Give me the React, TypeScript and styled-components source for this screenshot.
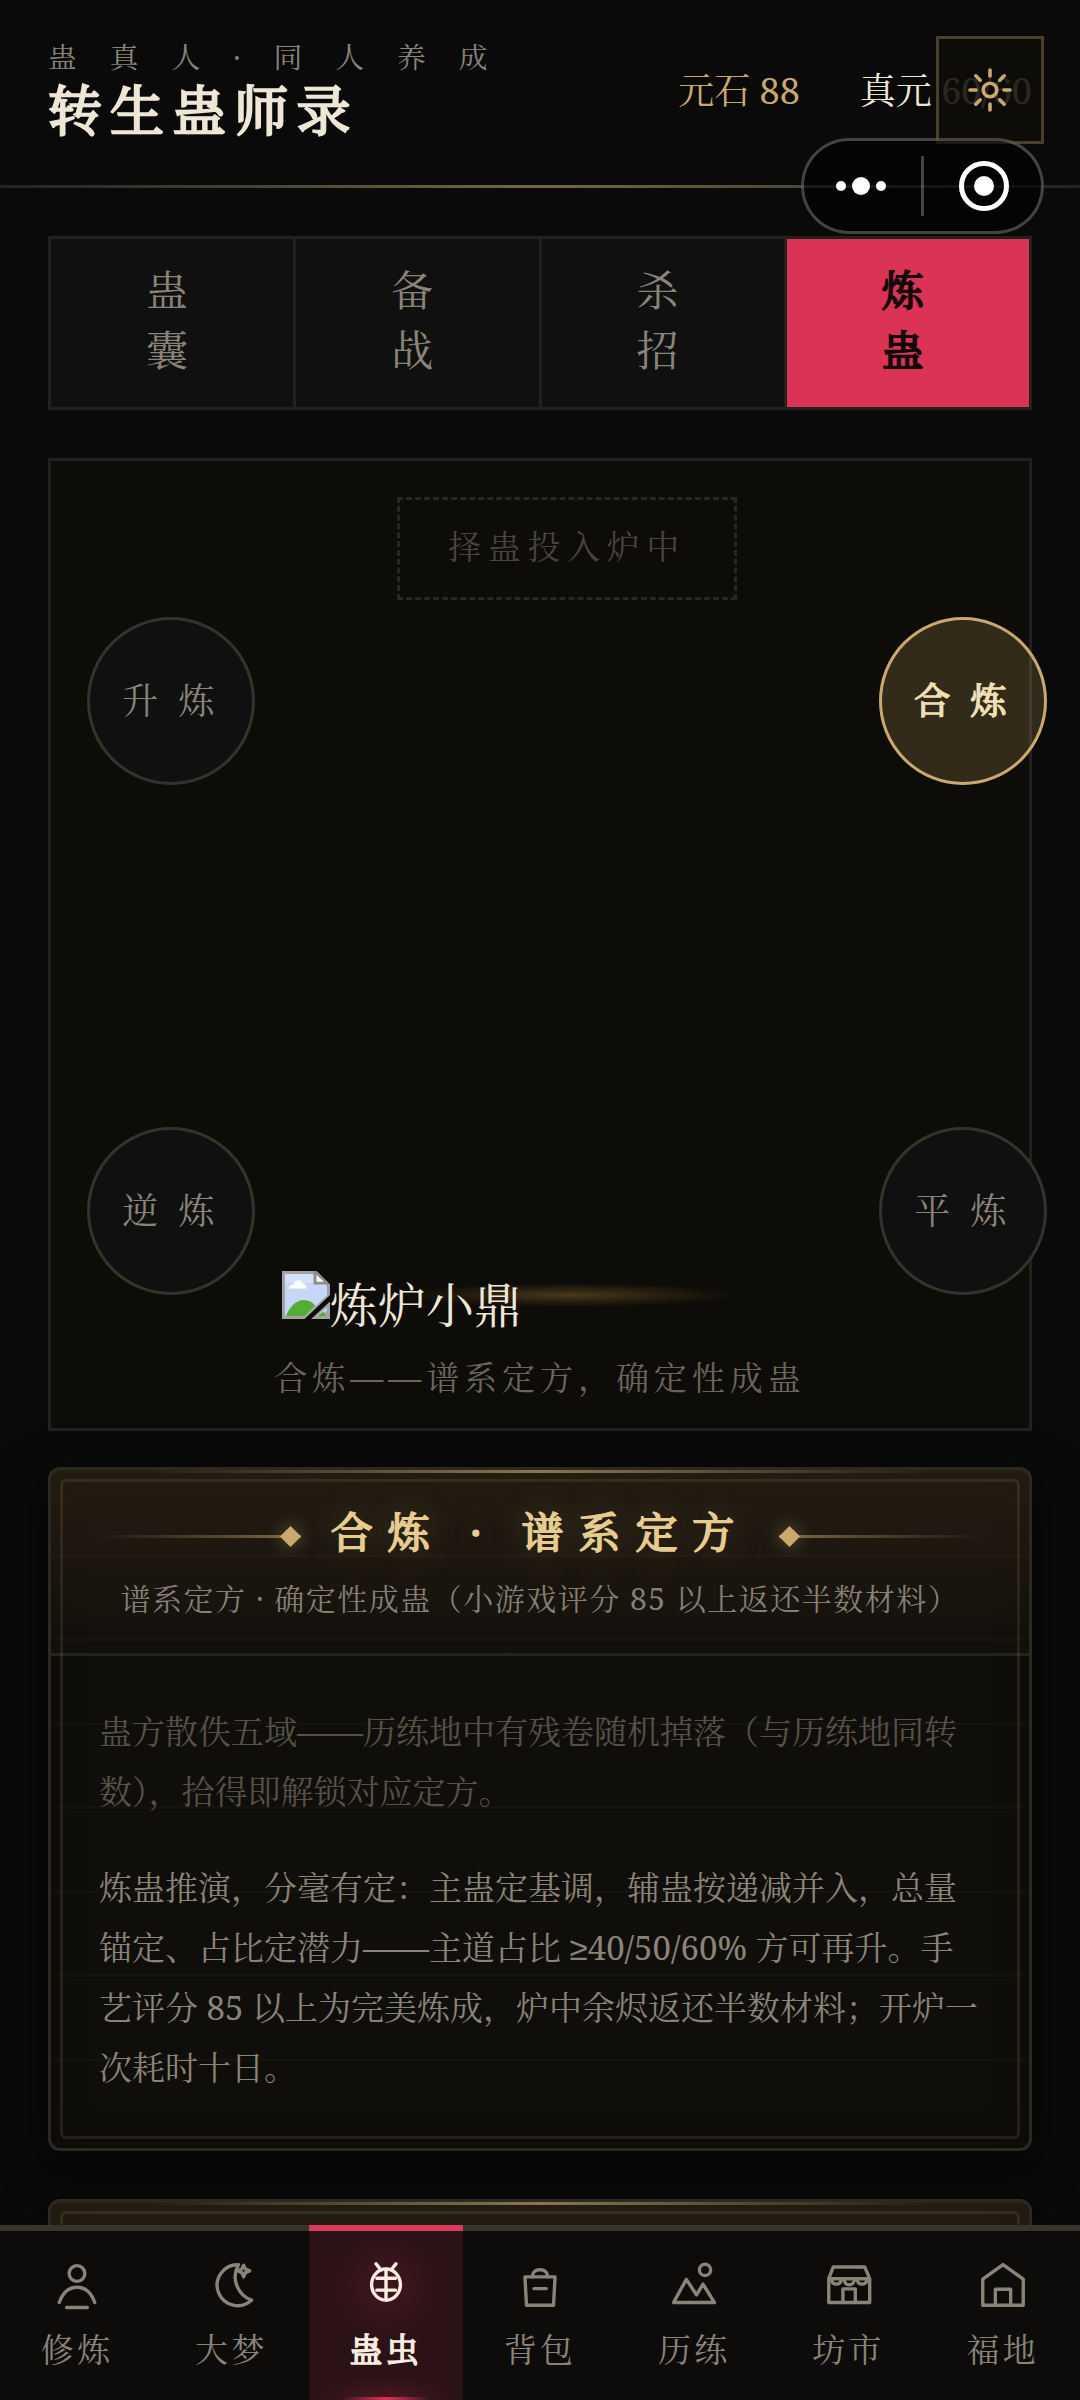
import React from "react";
import styled, { createGlobalStyle, css } from "styled-components";

const Global = createGlobalStyle`
  *, *::before, *::after { box-sizing: border-box; }
  body {
    margin: 0;
    background: #0a0a0a;
    color: #efe7d6;
    font-family: "Noto Serif", "Noto Serif CJK SC", "Noto Serif SC", "Noto Sans CJK SC", serif;
    font-size: 48px;
  }
  p, h1, h2 { margin: 0; font-weight: 400; }
  button { font: inherit; margin: 0; }
`;

/* Emboldened regular face: every stroke grows evenly. */
const heavy = css`
  font-weight: 400;
  -webkit-text-stroke: 0.042em currentColor;
`;

const Screen = styled.div`
  width: 1080px;
  height: 2400px;
  display: flex;
  flex-direction: column;
  overflow: hidden;
  position: relative;
  background: #0a0a0a;
`;

/* ---------- header ---------- */

const Header = styled.header`
  flex: none;
  height: 188px;
  padding: 35px 48px 0;
  display: flex;
  justify-content: space-between;
  border-bottom: 3px solid;
  border-image: linear-gradient(90deg, #22221f, #75684a 50%, #22221f) 1;
`;

const Brand = styled.div`
  display: flex;
  flex-direction: column;
`;

const Series = styled.p`
  font-size: 28.8px;
  line-height: 43px;
  letter-spacing: 32.95px;
  color: #8a8478;
  white-space: nowrap;
`;

const GameTitle = styled.h1`
  font-size: 54px;
  line-height: 64px;
  ${heavy}
  letter-spacing: 8.1px;
  white-space: nowrap;
`;

const Stats = styled.div`
  display: flex;
  gap: 60px;
  margin-top: 26px;
  font-size: 36px;
  line-height: 60px;
  white-space: nowrap;
`;

const Stat = styled.span<{ $gold?: boolean }>`
  color: ${(p) => (p.$gold ? "#c9a96e" : "#efe7d6")};
`;

const ThemeButton = styled.button`
  position: absolute;
  top: 36px;
  right: 36px;
  width: 108px;
  height: 108px;
  padding: 0;
  display: grid;
  place-items: center;
  border: 3px solid #4a4029;
  background: rgba(15, 13, 8, 0.88);
  color: #c9a96e;
`;

const Capsule = styled.div`
  position: absolute;
  top: 138px;
  right: 36px;
  width: 243px;
  height: 96px;
  display: grid;
  grid-template-columns: 1fr 3px 1fr;
  align-items: center;
  justify-items: center;
  border: 3px solid rgba(255, 255, 255, 0.25);
  border-radius: 48px;
  background: rgba(0, 0, 0, 0.6);
`;

const CapsuleRule = styled.span`
  width: 3px;
  height: 60px;
  background: rgba(255, 255, 255, 0.25);
`;

const Dots = styled.span`
  display: flex;
  align-items: center;
  gap: 6px;
  margin-right: 3px;
`;

const Dot = styled.span<{ $size: number }>`
  width: ${(p) => p.$size}px;
  height: ${(p) => p.$size}px;
  border-radius: 50%;
  background: #fff;
`;

const Ring = styled.span`
  width: 50px;
  height: 50px;
  display: grid;
  place-items: center;
  border: 5px solid #fff;
  border-radius: 50%;
  margin-left: 2px;
`;

/* ---------- body ---------- */

const Content = styled.main`
  flex: 1;
  min-height: 0;
  overflow: hidden;
  padding: 48px 48px 0;
`;

const Tabs = styled.nav`
  display: grid;
  grid-template-columns: repeat(4, 1fr);
  gap: 3px;
  height: 174px;
  border: 3px solid #23211b;
  background: #23211b;
`;

const Tab = styled.button<{ $active?: boolean }>`
  padding: 21px 92px 27px 90px;
  border: 0;
  background: ${(p) => (p.$active ? "#da3355" : "#101010")};
  color: ${(p) => (p.$active ? "#120a0a" : "#8a8478")};
  font-size: 42px;
  ${(p) => p.$active && heavy}
  line-height: 60px;
  letter-spacing: 8.4px;
  word-break: break-all;
`;

const Furnace = styled.section`
  height: 973px;
  margin-top: 48px;
  padding: 36px 36px 0;
  border: 3px solid #23211d;
  background: #0d0c09;
`;

const Stage = styled.div`
  width: 960px;
  height: 798px;
  display: flex;
  flex-direction: column;
  align-items: center;
`;

const Slot = styled.div`
  height: 103px;
  padding: 0 48px;
  border: 3px dashed #292721;
  color: #48443c;
  font-size: 33px;
  line-height: 93px;
  letter-spacing: 6.6px;
  white-space: nowrap;
`;

const StageRow = styled.div<{ $last?: boolean }>`
  width: 100%;
  display: flex;
  justify-content: space-between;
  margin-top: ${(p) => (p.$last ? "auto" : "17px")};
`;

const Mode = styled.button<{ $active?: boolean }>`
  flex: none;
  width: 168px;
  height: 168px;
  padding: 0 0 4px;
  border-radius: 50%;
  border: 3px solid #35322b;
  background: #101010;
  color: #8a8478;
  font-size: 36px;
  letter-spacing: 5.4px;
  white-space: nowrap;
  position: relative;
  ${(p) =>
    p.$active &&
    css`
      border-color: #c9a96e;
      background: rgba(201, 169, 97, 0.2);
      color: #f0dfb4;
      ${heavy}
    `}
`;

const Cauldron = styled.div`
  flex: 1;
  height: 168px;
  padding: 144px 0 0 27px;
  display: flex;
  align-items: flex-start;
  position: relative;
`;

const Ember = styled.span`
  position: absolute;
  left: 147px;
  top: 156px;
  width: 336px;
  height: 24px;
  background: radial-gradient(closest-side, rgba(201, 149, 60, 0.33), rgba(201, 149, 60, 0.15) 50%, transparent);
`;

const BrokenImage = styled.svg`
  flex: none;
  display: block;
`;

const AltText = styled.span`
  position: relative;
  line-height: 67px;
  white-space: nowrap;
`;

const FurnaceCaption = styled.p`
  margin-top: 53px;
  text-align: center;
  font-size: 33px;
  line-height: 60px;
  letter-spacing: 4.95px;
  color: #6b655a;
  white-space: nowrap;
`;

const Scroll = styled.section<{ $gap: number }>`
  position: relative;
  height: 684px;
  margin-top: ${(p) => p.$gap}px;
  border: 3px solid #2c2922;
  border-radius: 12px;
  background:
    linear-gradient(180deg, rgba(201, 169, 97, 0.022) 3px, transparent 3px) 0 0 / 100% 84px,
    #100e0a;
  box-shadow: 0 12px 48px rgba(0, 0, 0, 0.6), inset 0 0 36px rgba(0, 0, 0, 0.3);

  &::before {
    content: "";
    position: absolute;
    inset: 9px;
    border: 3px solid rgba(201, 169, 110, 0.13);
    border-radius: 6px;
    pointer-events: none;
  }
  &::after {
    content: "";
    position: absolute;
    top: 0;
    left: 10%;
    right: 10%;
    height: 3px;
    background: linear-gradient(90deg, transparent, #8a7650, transparent);
  }
`;

const ScrollHead = styled.div`
  height: 186px;
  padding: 32px 48px 0;
  border-bottom: 3px solid #24221d;
  border-radius: 9px 9px 0 0;
  background: linear-gradient(180deg, rgba(201, 155, 95, 0.11), rgba(201, 169, 97, 0.01));
`;

const TitleRow = styled.div`
  display: flex;
  align-items: center;
  gap: 30px;
`;

const Flourish = styled.span<{ $side: "left" | "right" }>`
  flex: 1;
  height: 3px;
  margin-top: 9px;
  position: relative;
  background: linear-gradient(
    ${(p) => (p.$side === "left" ? "90deg" : "270deg")},
    transparent,
    rgba(201, 169, 110, 0.55)
  );

  &::after {
    content: "";
    position: absolute;
    top: -6px;
    ${(p) => (p.$side === "left" ? "right: 3px;" : "left: 3px;")}
    width: 15px;
    height: 15px;
    background: #c9a96e;
    transform: rotate(45deg);
    box-shadow: 0 0 18px rgba(201, 169, 110, 0.5);
  }
`;

const ScrollTitle = styled.h2`
  font-size: 42px;
  line-height: 60px;
  ${heavy}
  letter-spacing: 14.9px;
  color: #e6cc8f;
  text-shadow: 0 0 36px rgba(201, 169, 110, 0.4);
  white-space: nowrap;
`;

const ScrollSub = styled.p`
  margin-top: 13px;
  text-align: center;
  font-size: 30px;
  line-height: 48px;
  letter-spacing: 1.5px;
  color: #857f74;
  white-space: nowrap;
`;

const ScrollBody = styled.div`
  display: flex;
  flex-direction: column;
  gap: 36px;
  padding: 46px 48px;
  font-size: 33px;
  line-height: 60px;
`;

const Passage = styled.p<{ $faint?: boolean }>`
  color: ${(p) => (p.$faint ? "#565147" : "#8a8478")};
`;

const Sign = styled.span`
  font-family: "Noto Sans", sans-serif;
  line-height: 1;
`;

/* ---------- bottom navigation ---------- */

const BottomNav = styled.nav`
  flex: none;
  position: relative;
  height: 175px;
  display: grid;
  grid-template-columns: repeat(7, 1fr);
  background: #0d0c0a;
`;

const NavItem = styled.button<{ $active?: boolean }>`
  position: relative;
  padding: 27px 0 0;
  border: 0;
  border-top: 6px solid ${(p) => (p.$active ? "#da3a5b" : "#38342b")};
  background: transparent;
  color: #8a8478;
  display: flex;
  flex-direction: column;
  align-items: center;
  font-size: 33px;
  line-height: 48px;
  letter-spacing: 3.3px;
  ${(p) =>
    p.$active &&
    css`
      color: #fbeee0;
      ${heavy}
      background:
        radial-gradient(circle 54px at 50% 56px, rgba(218, 51, 85, 0.13), transparent),
        radial-gradient(ellipse 70px 24px at 50% 100%, rgba(218, 51, 85, 0.18), transparent),
        #2b1217;
      &::after {
        content: "";
        position: absolute;
        left: 34px;
        right: 34px;
        bottom: 0;
        height: 3px;
        background: linear-gradient(90deg, transparent, #da3355, transparent);
      }
    `}
`;

const NavIcon = styled.svg`
  width: 54px;
  height: 54px;
  margin-bottom: 14px;
  fill: none;
  stroke: currentColor;
  stroke-width: 1.5;
  stroke-linecap: round;
  stroke-linejoin: round;
`;

const SunIcon = styled.svg`
  width: 48px;
  height: 48px;
  fill: none;
  stroke: currentColor;
  stroke-width: 1.8;
  stroke-linecap: round;
`;

const TABS = ["蛊囊", "备战", "杀招", "炼蛊"];

const NAV: { label: string; icon: React.ReactNode }[] = [
  {
    label: "修炼",
    icon: (
      <>
        <circle cx="12" cy="6.9" r="3.5" />
        <path d="M4.1 19.8c1.5-4.4 4.3-6.8 7.9-6.8s6.4 2.4 7.9 6.8M7.4 22h9.2" />
      </>
    ),
  },
  {
    label: "大梦",
    icon: (
      <>
        <path d="M15.3 3A9.1 9.1 0 1 0 21.2 18.7C15.5 17 11.6 9.5 15.3 3z" />
        <path d="M17.6 3.2l.8 1.7 1.9.8-1.900.8-.8 1.900-.8-1.900-1.800-.8 1.800-.8z" />
      </>
    ),
  },
  {
    label: "蛊虫",
    icon: (
      <>
        <ellipse cx="12" cy="11.8" rx="6.4" ry="6.9" />
        <path d="M12 5v13.7M7.9 9h8.3M7.9 14.3h8.3M9.5 5L7.6 2.6M14.5 5l1.9-2.4" />
      </>
    ),
  },
  {
    label: "背包",
    icon: (
      <>
        <path d="M5.3 8.4h13.4L18 21H6z" />
        <path d="M8.6 8.4C8.6 6.3 10 5.2 12 5.2s3.4 1.1 3.4 3.2M9.3 13.6h5.5" />
      </>
    ),
  },
  {
    label: "历练",
    icon: (
      <>
        <path d="M2.9 19.8L8.6 9.5l4.5 6.9 2.9-4.8 5.1 8.200z" />
        <circle cx="16.9" cy="5.3" r="2.5" />
      </>
    ),
  },
  {
    label: "坊市",
    icon: (
      <>
        <path d="M5 4h14l2.2 5.2H3zM3 9.2V19.8h18.2V9.2" />
        <path d="M4.2 9.8c.5 2.4 3.8 2.4 4.3.2M9.9 10c.5 2.5 3.9 2.5 4.4 0M15.7 10c.5 2.2 3.8 2.2 4.3-.2M9.3 19.8v-6.1h5.5v6.1" />
      </>
    ),
  },
  {
    label: "福地",
    icon: <path d="M12 2.9l9 6.5V21H3V9.4zM8.6 21v-7.100h6.800V21" />,
  },
];

function BrokenPicture() {
  return (
    <BrokenImage width="48" height="48" viewBox="0 0 16 16">
      <path d="M0 0h11.5L16 4.5V8L7.5 16H0z" fill="#a3a3a3" />
      <path d="M1 1h10l4 4v3.2L7.6 15H1z" fill="#c6d6f6" />
      <path d="M1 1h9.5v3H1z" fill="#d5e1f8" />
      <path d="M2.3 5.8C2.3 4.7 3.4 4.4 4 4.3c.3-1.5 2.3-1.7 2.9-.2C7.8 4.3 8.3 5 8.3 5.8z" fill="#fff" />
      <path d="M1.3 15C2.6 11.8 4.9 9.7 7.2 9.7c1.7 0 3 .7 3.9 1.9L7.6 15z" fill="#56ad35" />
      <path d="M10.5 0h1L16 4.5h-5.500z" fill="#8d8d8d" />
      <path d="M11.5 1.3v2.3h2.500z" fill="#fff" />
      <path d="M16 10.2V16H9.7z" fill="#a3a3a3" />
      <path d="M15 12.2V13L13.7 15h-2.200z" fill="#c6d6f6" />
      <path d="M13.8 13.5l1 1.500h-3z" fill="#56ad35" />
    </BrokenImage>
  );
}

export default function App() {
  return (
    <>
      <Global />
      <Screen>
        <Header>
          <Brand>
            <Series>蛊真人·同人养成</Series>
            <GameTitle>转生蛊师录</GameTitle>
          </Brand>
          <Stats>
            <Stat $gold>元石 88</Stat>
            <Stat>真元 60/60</Stat>
          </Stats>
        </Header>

        <Content>
          <Tabs>
            {TABS.map((t, i) => (
              <Tab key={t} $active={i === 3}>
                {t}
              </Tab>
            ))}
          </Tabs>

          <Furnace>
            <Stage>
              <Slot>择蛊投入炉中</Slot>
              <StageRow>
                <Mode>升 炼</Mode>
                <Mode $active>合 炼</Mode>
              </StageRow>
              <StageRow $last>
                <Mode>逆 炼</Mode>
                <Cauldron>
                  <Ember />
                  <BrokenPicture />
                  <AltText>炼炉小鼎</AltText>
                </Cauldron>
                <Mode>平 炼</Mode>
              </StageRow>
            </Stage>
            <FurnaceCaption>合炼——谱系定方，确定性成蛊</FurnaceCaption>
          </Furnace>

          <Scroll $gap={36}>
            <ScrollHead>
              <TitleRow>
                <Flourish $side="left" />
                <ScrollTitle>合炼 · 谱系定方</ScrollTitle>
                <Flourish $side="right" />
              </TitleRow>
              <ScrollSub>谱系定方 · 确定性成蛊（小游戏评分 85 以上返还半数材料）</ScrollSub>
            </ScrollHead>
            <ScrollBody>
              <Passage $faint>
                蛊方散佚五域——历练地中有残卷随机掉落（与历练地同转数），拾得即解锁对应定方。
              </Passage>
              <Passage>
                炼蛊推演，分毫有定：主蛊定基调，辅蛊按递减并入，总量锚定、占比定潜力——主道占比 <Sign>≥</Sign>40/50/60%
                方可再升。手艺评分 85 以上为完美炼成，炉中余烬返还半数材料；开炉一次耗时十日。
              </Passage>
            </ScrollBody>
          </Scroll>

          <Scroll $gap={48}>
            <ScrollHead />
          </Scroll>
        </Content>

        <BottomNav>
          {NAV.map((n, i) => (
            <NavItem key={n.label} $active={i === 2}>
              <NavIcon viewBox="0 0 24 24">{n.icon}</NavIcon>
              {n.label}
            </NavItem>
          ))}
        </BottomNav>

        <ThemeButton aria-label="theme">
          <SunIcon viewBox="0 0 24 24">
            <circle cx="12" cy="12" r="3.4" />
            <path d="M12 2v3M12 19v3M2 12h3M19 12h3M4.9 4.9l2.2 2.2M16.9 16.9l2.2 2.2M4.9 19.1l2.2-2.2M16.9 7.1l2.2-2.2" />
          </SunIcon>
        </ThemeButton>
        <Capsule>
          <Dots>
            <Dot $size={10} />
            <Dot $size={18} />
            <Dot $size={10} />
          </Dots>
          <CapsuleRule />
          <Ring>
            <Dot $size={20} />
          </Ring>
        </Capsule>
      </Screen>
    </>
  );
}
